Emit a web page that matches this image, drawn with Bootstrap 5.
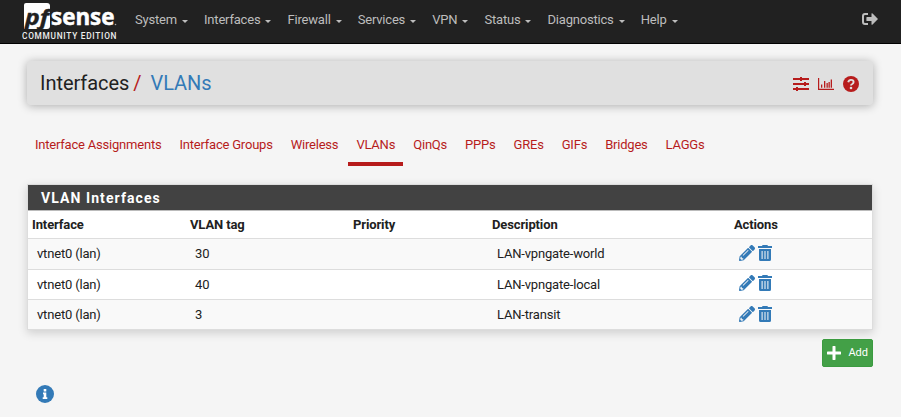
<!DOCTYPE html>
<html lang="en">
<head>
<meta charset="utf-8">
<meta name="viewport" content="width=device-width, initial-scale=1">
<title>Interfaces: VLANs</title>
<link href="https://cdn.jsdelivr.net/npm/bootstrap@5.3.0/dist/css/bootstrap.min.css" rel="stylesheet">
<style>
body{font-family:Roboto,sans-serif;font-size:13px;line-height:18px;color:#212121;background:#f5f5f5;overflow:hidden}
svg{display:block;flex:none}
a{text-decoration:none}
.topbar{height:44px;background:#212121;border-bottom:1px solid #000;padding:0 23px 0 22px}
.brand{width:96px;height:43px;margin-right:17px}
.topbar .nav-link{color:#bdbdbd;padding:10px 16.100px 14px 0;line-height:19px;letter-spacing:-.2px;white-space:nowrap}
.topbar .dropdown-toggle::after{border-width:3px 3px 0;margin-left:5px;vertical-align:1px}
.signout{color:#bdbdbd;margin-top:-5px}
.page-head{margin:17px 28px 0 27px;height:44px;background:#e0e0e0;border-radius:4px;padding:0 14px 0 13px;box-shadow:0 1px 10px rgba(0,0,0,.3)}
.page-head ol{font-size:20px;line-height:28px;letter-spacing:-.05px}
.head-icons{gap:9px;padding-top:2px}
.blue{color:#337ab7}.red{color:#b71c1c}
.sep{padding:0 5px 0 4px}
.tabs{margin:24px 0 0 27px}
.tabs .nav-link{color:#b71c1c;padding:7px 8px 9px;margin-right:2px;border-bottom:4px solid transparent;line-height:17px;letter-spacing:-.21px;white-space:nowrap}
.tabs .nav-link.active{border-color:#b71c1c}
.vlan-panel{margin:18px 28px 0 27px;border:1px solid #ddd;border-radius:0;box-shadow:0 3px 9px rgba(0,0,0,.16);background:#fff}
.panel-title{background:#424242;color:#fff;height:26px;padding-left:13px;font-size:14px;font-weight:700;line-height:27px;letter-spacing:1.080px;border-bottom:1px solid #bbb}
.vlan-table{table-layout:fixed;line-height:18px;--bs-table-striped-bg:#f9f9f9;--bs-table-color:#212121;--bs-table-striped-color:#212121;border-color:#ddd}
.vlan-table th{padding:4px;height:27px;letter-spacing:-.12px}
.vlan-table td{padding:6px 9px 5px;height:30px;letter-spacing:-.18px}
.vlan-table tbody tr:first-child td{padding-bottom:6px;height:31px}
.vlan-table tbody tr:last-child td{border-bottom:0}
.acts{gap:3px;height:17px}
.vlan-table tbody tr:nth-child(2) .acts{margin-top:-1px}
.add-btn{background:#43a047;color:#fff;width:51px;height:28px;border:1px solid #3b9b40;border-radius:2px;padding:0 4px;font-size:11px;line-height:16px}
.add-btn:hover{background:#388e3c;color:#fff}
.add-row{margin:9px 28px 0 0}
.info{margin:18px 0 0 36px}
</style>
</head>
<body>
<nav class="topbar d-flex align-items-start">
  <a href="#" class="brand" aria-label="pfSense">
    <svg width="96" height="43" viewBox="0 0 96 43">
      <path fill="#fff" d="M4 3h21q3 0 3 3v20q0 3-3 3H2V5q0-2 2-2z"/>
      <text x="3" y="24.500" font-family="'Open Sans',sans-serif" font-size="22" font-weight="700" font-style="italic" fill="#212121" stroke="#212121" stroke-width=".4" textLength="24" lengthAdjust="spacingAndGlyphs">pf</text>
      <text x="29" y="24.500" font-family="'Open Sans',sans-serif" font-size="22.500" font-weight="700" fill="#fff" stroke="#fff" stroke-width=".5" textLength="63.500" lengthAdjust="spacingAndGlyphs">sense</text>
      <circle cx="93.500" cy="24.500" r=".8" fill="#aaa"/>
      <text x="0" y="38.800" font-family="Roboto,sans-serif" font-size="8.300" font-weight="500" fill="#eee" textLength="94.500">COMMUNITY EDITION</text>
    </svg>
  </a>
  <ul class="nav flex-nowrap flex-grow-1">
    <li><a class="nav-link dropdown-toggle" href="#">System</a></li>
    <li><a class="nav-link dropdown-toggle" href="#">Interfaces</a></li>
    <li><a class="nav-link dropdown-toggle" href="#">Firewall</a></li>
    <li><a class="nav-link dropdown-toggle" href="#">Services</a></li>
    <li><a class="nav-link dropdown-toggle" href="#">VPN</a></li>
    <li><a class="nav-link dropdown-toggle" href="#">Status</a></li>
    <li><a class="nav-link dropdown-toggle" href="#">Diagnostics</a></li>
    <li><a class="nav-link dropdown-toggle" href="#">Help</a></li>
  </ul>
  <a href="#" class="signout align-self-center" aria-label="Log out">
    <svg width="16" height="12" viewBox="0 0 16 12" fill="currentColor"><path d="M6 0v2H3q-1 0-1 1v6q0 1 1 1h3v2H3q-3 0-3-3V3q0-3 3-3zM5 4h4.500V.5q.4-.7 1.100 0L16 6l-5.400 5.500q-.7.700-1.100 0V8H5q-.6 0-.6-.6V4.600Q4.400 4 5 4z"/></svg>
  </a>
</nav>

<header class="page-head d-flex align-items-center justify-content-between">
  <ol class="list-unstyled d-flex mb-0">
    <li>Interfaces</li><li class="red sep">/</li><li class="ms-1"><a class="blue" href="#">VLANs</a></li>
  </ol>
  <div class="red d-flex align-items-center head-icons">
    <svg width="16" height="16" viewBox="0 0 16 16" fill="currentColor"><path d="M0 2h16v2H0zM0 7h16v2H0zM0 12h16v2H0zM7 1h2v4H7zM11 6h2v4h-2zM3 11h2v4H3z"/></svg>
    <svg width="16" height="16" viewBox="0 0 16 16" fill="currentColor"><path d="M0 2h1.200v10.800H16V14H0zM3 8.500h1.300v3.300H3zM6 5h1.300v6.800H6zM8.500 7h1.300v4.800H8.500zM10.500 6h1.300v5.800h-1.300zM12.700 3.500H14v8.300h-1.300z"/></svg>
    <svg width="16" height="16" viewBox="0 0 16 16"><circle cx="8" cy="8" r="8" fill="currentColor"/><path d="M5.200 6.200Q5.800 3.900 8 3.900q2.600 0 2.600 2.200 0 1.200-1.300 1.900Q8 8.600 8 9.500" fill="none" stroke="#e0e0e0" stroke-width="1.900"/><circle cx="8" cy="12" r="1.300" fill="#e0e0e0"/></svg>
  </div>
</header>

<ul class="nav tabs flex-nowrap">
  <li><a class="nav-link" href="#">Interface Assignments</a></li>
  <li><a class="nav-link" href="#">Interface Groups</a></li>
  <li><a class="nav-link" href="#">Wireless</a></li>
  <li><a class="nav-link active" href="#">VLANs</a></li>
  <li><a class="nav-link" href="#">QinQs</a></li>
  <li><a class="nav-link" href="#">PPPs</a></li>
  <li><a class="nav-link" href="#">GREs</a></li>
  <li><a class="nav-link" href="#">GIFs</a></li>
  <li><a class="nav-link" href="#">Bridges</a></li>
  <li><a class="nav-link" href="#">LAGGs</a></li>
</ul>

<svg class="d-none" aria-hidden="true">
  <symbol id="pencil" viewBox="0 0 512 512"><path d="M497.900 142.100l-46.100 46.100c-4.700 4.700-12.300 4.700-17 0l-111-111c-4.700-4.700-4.700-12.300 0-17l46.100-46.100c18.700-18.700 49.100-18.700 67.900 0l60.100 60.100c18.800 18.700 18.800 49.100 0 67.900zM284.200 99.800L21.600 362.400.4 483.900c-2.900 16.400 11.400 30.600 27.800 27.800l121.500-21.300 262.600-262.600c4.700-4.700 4.700-12.300 0-17l-111-111c-4.800-4.700-12.400-4.700-17.100 0zM124.100 339.900c-5.500-5.500-5.500-14.300 0-19.800l154-154c5.500-5.500 14.300-5.500 19.800 0s5.500 14.300 0 19.800l-154 154c-5.500 5.500-14.300 5.500-19.800 0zM88 424h48v36.300l-64.500 11.300-31.100-31.100L51.700 376H88v48z"/></symbol>
  <symbol id="trash" viewBox="0 0 14 16"><path d="M0 1h4l.6-1h4.800l.6 1h4v2H0z"/><path fill-rule="evenodd" d="M1 4h12v10.500q0 1.500-1.500 1.500h-9Q1 16 1 14.500zM3.600 6v8h1V6zM6.500 6v8h1V6zM9.400 6v8h1V6z"/></symbol>
</svg>

<section class="vlan-panel">
  <h2 class="panel-title mb-0">VLAN Interfaces</h2>
  <table class="table table-striped vlan-table mb-0">
    <colgroup><col style="width:158px"><col style="width:163px"><col style="width:139px"><col style="width:242px"><col></colgroup>
    <thead><tr><th>Interface</th><th>VLAN tag</th><th>Priority</th><th>Description</th><th>Actions</th></tr></thead>
    <tbody>
      <tr><td>vtnet0 (lan)</td><td>30</td><td></td><td>LAN-vpngate-world</td><td><div class="blue d-flex acts"><svg width="16" height="16" fill="currentColor"><use href="#pencil"/></svg><svg width="14" height="16" fill="currentColor"><use href="#trash"/></svg></div></td></tr>
      <tr><td>vtnet0 (lan)</td><td>40</td><td></td><td>LAN-vpngate-local</td><td><div class="blue d-flex acts"><svg width="16" height="16" fill="currentColor"><use href="#pencil"/></svg><svg width="14" height="16" fill="currentColor"><use href="#trash"/></svg></div></td></tr>
      <tr><td>vtnet0 (lan)</td><td>3</td><td></td><td>LAN-transit</td><td><div class="blue d-flex acts"><svg width="16" height="16" fill="currentColor"><use href="#pencil"/></svg><svg width="14" height="16" fill="currentColor"><use href="#trash"/></svg></div></td></tr>
    </tbody>
  </table>
</section>

<div class="add-row d-flex justify-content-end">
  <a href="#" class="btn add-btn d-flex align-items-center justify-content-between"><svg width="14" height="14" viewBox="0 0 14 14"><path d="M7 1v12M1 7h12" stroke="#fff" stroke-width="3" stroke-linecap="round"/></svg>Add</a>
</div>
<div class="info blue"><svg width="18" height="18" viewBox="0 0 18 18"><circle cx="9" cy="9" r="9" fill="currentColor"/><path fill="#fff" d="M7.700 4h2.600v2.500H7.700zM7 7.500h3.300v4.800h1V14H6.700v-1.700h1V9.200H7z"/></svg></div>
<script src="https://cdn.jsdelivr.net/npm/bootstrap@5.3.0/dist/js/bootstrap.bundle.min.js"></script>
</body>
</html>
